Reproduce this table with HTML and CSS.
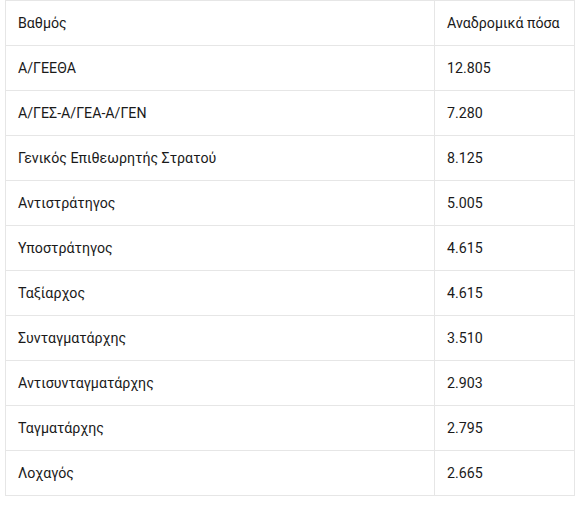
FILE: index.html
```html
<!DOCTYPE html>
<html lang="el">
<head>
<meta charset="utf-8">
<link rel="stylesheet" href="styles.css">
</head>
<body>
<table class="pay-table">
  <tbody>
    <tr><td class="c-rank">Βαθμός</td><td class="c-amt">Αναδρομικά πόσα</td></tr>
    <tr><td class="c-rank">Α/ΓΕΕΘΑ</td><td class="c-amt">12.805</td></tr>
    <tr><td class="c-rank">Α/ΓΕΣ-Α/ΓΕΑ-Α/ΓΕΝ</td><td class="c-amt">7.280</td></tr>
    <tr><td class="c-rank">Γενικός Επιθεωρητής Στρατού</td><td class="c-amt">8.125</td></tr>
    <tr><td class="c-rank">Αντιστράτηγος</td><td class="c-amt">5.005</td></tr>
    <tr><td class="c-rank">Υποστράτηγος</td><td class="c-amt">4.615</td></tr>
    <tr><td class="c-rank">Ταξίαρχος</td><td class="c-amt">4.615</td></tr>
    <tr><td class="c-rank">Συνταγματάρχης</td><td class="c-amt">3.510</td></tr>
    <tr><td class="c-rank">Αντισυνταγματάρχης</td><td class="c-amt">2.903</td></tr>
    <tr><td class="c-rank">Ταγματάρχης</td><td class="c-amt">2.795</td></tr>
    <tr><td class="c-rank">Λοχαγός</td><td class="c-amt">2.665</td></tr>
  </tbody>
</table>
</body>
</html>
```

FILE: styles.css
```css
html, body {
  margin: 0;
  padding: 0;
  background: #ffffff;
}

body {
  font-family: Roboto, "Noto Sans", "Liberation Sans", sans-serif;
  font-size: 14.2px;
  color: #1a1a1a;
}

.pay-table {
  margin: 0 0 0 5px;
  width: 570px;
  border-collapse: collapse;
  border: 1px solid #e6e6e6;
}

.pay-table td {
  height: 44px;
  padding: 0 12px;
  border: 1px solid #e6e6e6;
  vertical-align: middle;
  line-height: 20px;
}

.c-rank {
  width: 404px;
}
```
